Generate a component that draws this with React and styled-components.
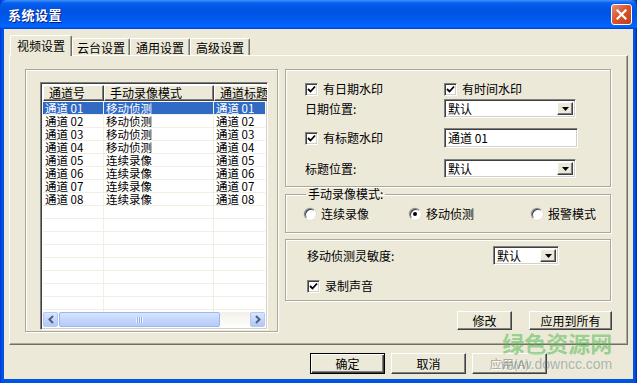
import React from "react";
import styled, { createGlobalStyle, css } from "styled-components";

const GlobalStyle = createGlobalStyle`
  html, body {
    margin: 0;
    padding: 0;
    background: #ece9d8;
  }
  body {
    font-family: "Noto Sans CJK SC", "Liberation Sans", sans-serif;
    font-size: 12px;
    color: #000;
  }
  * {
    box-sizing: border-box;
  }
`;

const channels = [
  { no: "通道 01", mode: "移动侦测", title: "通道 01" },
  { no: "通道 02", mode: "移动侦测", title: "通道 02" },
  { no: "通道 03", mode: "移动侦测", title: "通道 03" },
  { no: "通道 04", mode: "移动侦测", title: "通道 04" },
  { no: "通道 05", mode: "连续录像", title: "通道 05" },
  { no: "通道 06", mode: "连续录像", title: "通道 06" },
  { no: "通道 07", mode: "连续录像", title: "通道 07" },
  { no: "通道 08", mode: "连续录像", title: "通道 08" },
];

const columns = [61, 110, 70];

const raised = css`
  border: 1px solid;
  border-color: #fff #404040 #404040 #fff;
  box-shadow: inset -1px -1px 0 #808080;
`;

const sunken = css`
  border: 1px solid;
  border-color: #808080 #fff #fff #808080;
  box-shadow: inset 1px 1px 0 #404040, inset -1px -1px 0 #d4d0c8;
`;

const etched = css`
  border: 1px solid #aca899;
  box-shadow: inset 1px 1px 0 #fff, 1px 1px 0 #fff;
`;

function CheckBox({ checked, height, children }) {
  return (
    <CheckLabel $h={height}>
      <CheckSquare>
        {checked && (
          <svg width="9" height="9" viewBox="0 0 9 9">
            <polyline points="1,4 3.5,6.5 8,1.5" fill="none" stroke="#000" strokeWidth="1.8" />
          </svg>
        )}
      </CheckSquare>
      {children}
    </CheckLabel>
  );
}

function Radio({ checked, children }) {
  return (
    <CheckLabel>
      <RadioCircle>{checked && <RadioDot />}</RadioCircle>
      {children}
    </CheckLabel>
  );
}

function Combo({ value, width }) {
  return (
    <ComboBox $w={width}>
      <ComboText>{value}</ComboText>
      <ComboButton>
        <svg width="7" height="4" viewBox="0 0 7 4">
          <polygon points="0,0 7,0 3.5,4" fill="#000" />
        </svg>
      </ComboButton>
    </ComboBox>
  );
}

function ChannelList() {
  const blanks = Array.from({ length: 9 });
  return (
    <ListView>
      <ListHeader>
        <HeaderCell $w={columns[0]}>通道号</HeaderCell>
        <HeaderCell $w={columns[1]}>手动录像模式</HeaderCell>
        <HeaderCell $w={columns[2]}>通道标题</HeaderCell>
      </ListHeader>
      <ListBody>
        {channels.map((c, i) => (
          <ListRow key={c.no} $selected={i === 0}>
            <Cell $w={columns[0]}>{c.no}</Cell>
            <Cell $w={columns[1]}>{c.mode}</Cell>
            <Cell $w={columns[2]}>{c.title}</Cell>
          </ListRow>
        ))}
        {blanks.map((_, i) => (
          <ListRow key={i}>
            <Cell $w={columns[0]} />
            <Cell $w={columns[1]} />
            <Cell $w={columns[2]} />
          </ListRow>
        ))}
      </ListBody>
      <HScroll>
        <ScrollArrow>
          <svg width="6" height="9" viewBox="0 0 6 9">
            <polyline points="5,1 1.5,4.5 5,8" fill="none" stroke="#4d6185" strokeWidth="2" />
          </svg>
        </ScrollArrow>
        <ScrollTrack>
          <ScrollThumb>
            <Grip />
          </ScrollThumb>
        </ScrollTrack>
        <ScrollArrow>
          <svg width="6" height="9" viewBox="0 0 6 9">
            <polyline points="1,1 4.5,4.5 1,8" fill="none" stroke="#4d6185" strokeWidth="2" />
          </svg>
        </ScrollArrow>
      </HScroll>
    </ListView>
  );
}

export default function App() {
  return (
    <>
      <GlobalStyle />
      <Window>
        <TitleBar>
          <Title>系统设置</Title>
          <CloseButton>
            <svg width="11" height="11" viewBox="0 0 11 11">
              <path d="M1.5 1.5 L9.5 9.5 M9.5 1.5 L1.5 9.5" stroke="#fff" strokeWidth="2.2" strokeLinecap="square" />
            </svg>
          </CloseButton>
        </TitleBar>
        <Body>
          <TabStrip>
            <Tab $active $w={62}>视频设置</Tab>
            <Tab $w={58}>云台设置</Tab>
            <Tab $w={60}>通用设置</Tab>
            <Tab $w={60}>高级设置</Tab>
          </TabStrip>
          <TabPanel>
            <ListGroup>
              <ChannelList />
            </ListGroup>
            <RightColumn>
              <WatermarkGroup>
                <CheckBox checked>有日期水印</CheckBox>
                <CheckBox checked>有时间水印</CheckBox>
                <FieldLabel>日期位置:</FieldLabel>
                <Combo value="默认" width={132} />
                <CheckBox checked height={20}>有标题水印</CheckBox>
                <TextInput>通道 01</TextInput>
                <FieldLabel>标题位置:</FieldLabel>
                <Combo value="默认" width={132} />
              </WatermarkGroup>
              <ModeGroup>
                <Legend>手动录像模式:</Legend>
                <RadioRow>
                  <Radio>连续录像</Radio>
                  <Radio checked>移动侦测</Radio>
                  <Radio>报警模式</Radio>
                </RadioRow>
              </ModeGroup>
              <MotionGroup>
                <FieldLabel>移动侦测灵敏度:</FieldLabel>
                <Combo value="默认" width={66} />
                <CheckBox checked>录制声音</CheckBox>
              </MotionGroup>
              <ActionRow>
                <Button $w={55} $h={19}>修改</Button>
                <Button $w={83} $h={19}>应用到所有</Button>
              </ActionRow>
            </RightColumn>
          </TabPanel>
          <Footer>
            <Button $w={75} $default>确定</Button>
            <Button $w={75}>取消</Button>
            <Button $w={75} disabled>应用(A)</Button>
          </Footer>
        </Body>
        <Watermark>
          <WatermarkName>绿色资源网</WatermarkName>
          <WatermarkUrl>www.downcc.com</WatermarkUrl>
        </Watermark>
      </Window>
    </>
  );
}

const Window = styled.div`
  position: relative;
  width: 637px;
  height: 383px;
  display: flex;
  flex-direction: column;
  background: linear-gradient(to right, #0831d9 0, #0054e3 2px, #0054e3 calc(100% - 2px), #001ea0 100%);
  overflow: hidden;
`;

const TitleBar = styled.div`
  height: 29px;
  flex-shrink: 0;
  display: flex;
  align-items: center;
  justify-content: space-between;
  padding: 0 5px 0 8px;
  background: linear-gradient(
    to bottom,
    #3d95ff 0,
    #0a5fec 3px,
    #0055e5 8px,
    #0054e3 45%,
    #0060f5 80%,
    #0066ff 92%,
    #003dd7 100%
  );
  border-radius: 7px 7px 0 0;
`;

const Title = styled.span`
  color: #fff;
  font-size: 13px;
  font-weight: bold;
  text-shadow: 1px 1px 0 #0a1883;
  letter-spacing: 0.5px;
`;

const CloseButton = styled.div`
  width: 21px;
  height: 21px;
  border: 1px solid #fff;
  border-radius: 3px;
  display: flex;
  align-items: center;
  justify-content: center;
  background: linear-gradient(135deg, #e88f73 0%, #d9552f 45%, #c13e1b 100%);
`;

const Body = styled.div`
  flex: 1;
  margin: 0 4px 4px 4px;
  background: #ece9d8;
  display: flex;
  flex-direction: column;
  padding: 6px 5px 0 5px;
`;

const TabStrip = styled.div`
  display: flex;
  align-items: flex-end;
  height: 20px;
  padding-left: 1px;
`;

const Tab = styled.div`
  width: ${(p) => p.$w}px;
  height: ${(p) => (p.$active ? 21 : 17)}px;
  display: flex;
  align-items: center;
  justify-content: center;
  background: #ece9d8;
  border-top: 1px solid #fff;
  border-left: 1px solid #fff;
  border-right: 1px solid #716f64;
  box-shadow: inset -1px 0 0 #aca899;
  border-radius: 2px 2px 0 0;
  ${(p) =>
    p.$active &&
    css`
      margin-bottom: -1px;
      padding-bottom: 2px;
      position: relative;
      z-index: 1;
    `}
`;

const TabPanel = styled.div`
  height: 290px;
  display: grid;
  grid-template-columns: 253px 326px;
  column-gap: 7px;
  padding: 13px 15px 0 15px;
  border: 1px solid;
  border-color: #fff #716f64 #716f64 #fff;
  box-shadow: inset -1px -1px 0 #aca899;
  align-items: start;
`;

const ListGroup = styled.div`
  ${etched};
  height: 263px;
  display: flex;
  padding: 12px 9px 1px 14px;
`;

const ListView = styled.div`
  ${sunken};
  flex: 1;
  display: flex;
  flex-direction: column;
  background: #fff;
  overflow: hidden;
  padding: 2px;
`;

const ListHeader = styled.div`
  display: flex;
  height: 16px;
  flex-shrink: 0;
`;

const HeaderCell = styled.div`
  ${raised};
  flex: 0 0 ${(p) => p.$w}px;
  background: #ece9d8;
  display: flex;
  align-items: center;
  padding-left: 5px;
  line-height: 14px;
  white-space: nowrap;
  overflow: hidden;
`;

const ListBody = styled.div`
  flex: 1;
  overflow: hidden;
  padding-top: 1px;
`;

const ListRow = styled.div`
  display: flex;
  height: 13px;
  ${(p) =>
    p.$selected &&
    css`
      background: #316ac5;
      color: #fff;
    `}
`;

const Cell = styled.div`
  flex: 0 0 ${(p) => p.$w}px;
  height: 13px;
  box-shadow: inset -1px -1px 0 #f1efe2;
  padding-left: 2px;
  font-size: 11.5px;
  line-height: 13px;
  white-space: nowrap;
  overflow: hidden;
`;

const HScroll = styled.div`
  height: 15px;
  flex-shrink: 0;
  display: flex;
  background: linear-gradient(to bottom, #f3f1ec, #fefefb);
`;

const ScrollArrow = styled.div`
  width: 15px;
  height: 15px;
  flex-shrink: 0;
  display: flex;
  align-items: center;
  justify-content: center;
  border: 1px solid #b4c8f6;
  border-radius: 2px;
  background: linear-gradient(to bottom, #dae6fe, #c1d3fb 60%, #b3c8f6);
`;

const ScrollTrack = styled.div`
  flex: 1;
  display: flex;
  padding-left: 1px;
`;

const ScrollThumb = styled.div`
  width: 161px;
  border: 1px solid #9db6f0;
  border-radius: 2px;
  background: linear-gradient(to bottom, #d8e5fe, #c4d6fc 50%, #b6cbf8);
  display: flex;
  align-items: center;
  justify-content: center;
`;

const Grip = styled.div`
  width: 7px;
  height: 6px;
  background: repeating-linear-gradient(to right, #eef4fe 0 1px, #8cb0f8 1px 2px);
`;

const RightColumn = styled.div`
  display: flex;
  flex-direction: column;
`;

const WatermarkGroup = styled.div`
  ${etched};
  height: 118px;
  display: grid;
  grid-template-columns: 139px 133px;
  grid-template-rows: 17px 29px 31px 19px;
  align-items: start;
  padding: 12px 0 0 19px;
`;

const CheckLabel = styled.label`
  display: flex;
  align-items: center;
  gap: 5px;
  height: ${(p) => p.$h || 14}px;
  line-height: 14px;
  white-space: nowrap;
`;

const CheckSquare = styled.span`
  ${sunken};
  width: 13px;
  height: 13px;
  background: #fff;
  display: flex;
  align-items: center;
  justify-content: center;
  flex-shrink: 0;
`;

const RadioCircle = styled.span`
  width: 12px;
  height: 12px;
  border-radius: 50%;
  background: #fff;
  border: 1px solid;
  border-color: #808080 #fff #fff #808080;
  box-shadow: inset 1px 1px 0 #404040, 0 0 0 0.5px #d4d0c8;
  display: flex;
  align-items: center;
  justify-content: center;
  flex-shrink: 0;
`;

const RadioDot = styled.span`
  width: 4px;
  height: 4px;
  border-radius: 50%;
  background: #000;
`;

const FieldLabel = styled.div`
  height: 19px;
  display: flex;
  align-items: center;
  line-height: 14px;
  white-space: nowrap;
`;

const ComboBox = styled.div`
  ${sunken};
  width: ${(p) => p.$w}px;
  height: 19px;
  background: #fff;
  display: flex;
  padding: 2px;
`;

const ComboText = styled.div`
  flex: 1;
  display: flex;
  align-items: center;
  padding-left: 1px;
  line-height: 13px;
`;

const ComboButton = styled.div`
  ${raised};
  width: 16px;
  background: #ece9d8;
  display: flex;
  align-items: center;
  justify-content: center;
`;

const TextInput = styled.div`
  ${sunken};
  width: 134px;
  height: 20px;
  background: #fff;
  display: flex;
  align-items: center;
  padding-left: 3px;
  line-height: 14px;
`;

const ModeGroup = styled.fieldset`
  ${etched};
  margin: 1px 0 0 0;
  padding: 7px 0 11px 18px;
  min-width: 0;
`;

const Legend = styled.legend`
  margin-left: 2px;
  padding: 0 2px;
  font-size: 12px;
  line-height: 12px;
`;

const RadioRow = styled.div`
  display: grid;
  grid-template-columns: 105px 122px auto;
`;

const MotionGroup = styled.div`
  ${etched};
  margin-top: 6px;
  height: 62px;
  display: grid;
  grid-template-columns: 186px 66px;
  grid-template-rows: 19px 14px;
  row-gap: 14px;
  align-items: center;
  padding: 6px 0 0 21px;
`;

const ActionRow = styled.div`
  display: flex;
  justify-content: flex-end;
  gap: 17px;
  margin: 10px -1px 0 0;
`;

const Button = styled.button`
  ${raised};
  width: ${(p) => p.$w}px;
  height: ${(p) => p.$h || 21}px;
  background: #ece9d8;
  font-family: "Noto Sans CJK SC", "Liberation Sans", sans-serif;
  font-size: 12px;
  line-height: 14px;
  color: #000;
  padding: 0;
  ${(p) =>
    p.$default &&
    css`
      border-color: #000;
      box-shadow: inset 1px 1px 0 #fff, inset -1px -1px 0 #404040, inset -2px -2px 0 #808080;
    `}
  &:disabled {
    color: #aca899;
    text-shadow: 1px 1px 0 #fff;
  }
`;

const Footer = styled.div`
  display: flex;
  justify-content: flex-end;
  gap: 6px;
  margin-top: 8px;
  padding-right: 81px;
`;

const Watermark = styled.div`
  position: absolute;
  left: 501px;
  top: 330px;
  display: flex;
  flex-direction: column;
  align-items: flex-end;
  pointer-events: none;
`;

const WatermarkName = styled.div`
  font-family: "Noto Sans CJK SC", sans-serif;
  font-size: 22px;
  font-weight: bold;
  line-height: 24px;
  color: rgba(80, 185, 80, 0.55);
`;

const WatermarkUrl = styled.div`
  font-family: "Liberation Sans", sans-serif;
  font-size: 14px;
  line-height: 16px;
  margin-top: 2px;
  color: rgba(110, 135, 140, 0.55);
`;
